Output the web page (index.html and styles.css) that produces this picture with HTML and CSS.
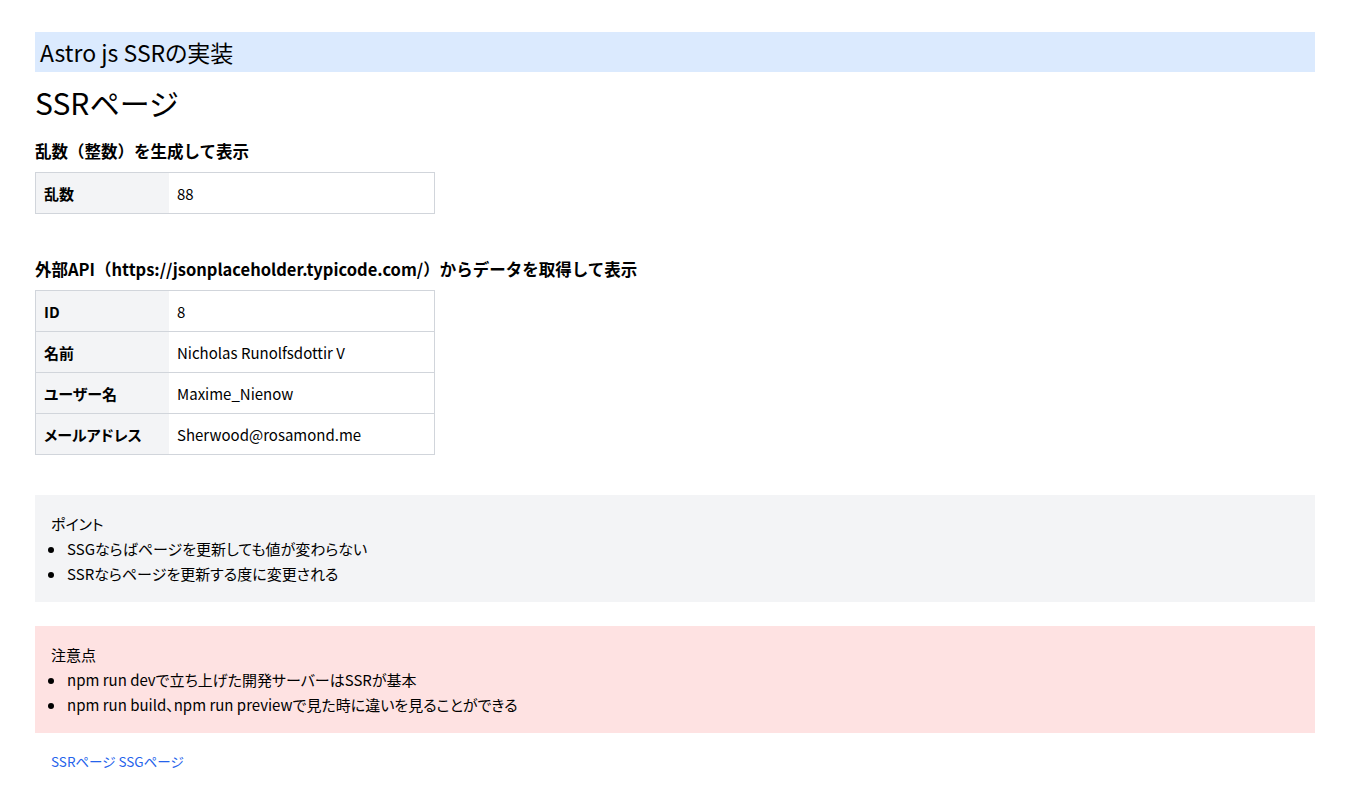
FILE: index.html
```html
<!DOCTYPE html>
<html lang="ja">
<head>
    <meta charset="UTF-8">
    <meta name="viewport" content="width=device-width, initial-scale=1.0">
    <title>Astro js SSRの実装</title>
    <link rel="stylesheet" href="styles.css">
</head>
<body>
    <div class="container">
        <h1 class="site-title">Astro js SSRの実装</h1>
        <h2 class="page-title">SSRページ</h2>

        <section class="block">
            <h3>乱数（整数）を生成して表示</h3>
            <table class="data">
                <tr><th>乱数</th><td>88</td></tr>
            </table>
        </section>

        <section class="block">
            <h3>外部API（https://jsonplaceholder.typicode.com/）からデータを取得して表示</h3>
            <table class="data">
                <tr><th>ID</th><td>8</td></tr>
                <tr><th>名前</th><td>Nicholas Runolfsdottir V</td></tr>
                <tr><th>ユーザー名</th><td>Maxime_Nienow</td></tr>
                <tr><th>メールアドレス</th><td>Sherwood@rosamond.me</td></tr>
            </table>
        </section>

        <div class="note point">
            <p>ポイント</p>
            <ul>
                <li>SSGならばページを更新しても値が変わらない</li>
                <li>SSRならページを更新する度に変更される</li>
            </ul>
        </div>

        <div class="note warning">
            <p>注意点</p>
            <ul>
                <li>npm run devで立ち上げた開発サーバーはSSRが基本</li>
                <li>npm run build、npm run previewで見た時に違いを見ることができる</li>
            </ul>
        </div>

        <nav class="links">
            <a href="/">SSRページ</a>
            <a href="/ssg">SSGページ</a>
        </nav>
    </div>
</body>
</html>
```

FILE: styles.css
```css
/* base */
body {
    margin: 0;
    padding: 0;
    font-family: "Noto Sans CJK JP", sans-serif;
    font-feature-settings: "palt";
    color: #000;
    background-color: #fff;
}

.container {
    max-width: 1280px;
    margin: 0 auto;
    padding-top: 32px;
}

/* headings */
.site-title {
    margin: 0;
    padding: 0 5px;
    height: 40px;
    line-height: 40px;
    font-size: 23px;
    font-weight: normal;
    background-color: #dbeafe;
}

.page-title {
    margin: 12px 0 0;
    font-size: 30px;
    line-height: 36px;
    font-weight: normal;
}

.block h3 {
    margin: 18px 0 8px;
    font-size: 16.5px;
    line-height: 26px;
    font-weight: bold;
    font-feature-settings: normal;
}

.block + .block h3 {
    margin-top: 42px;
}

/* tables */
.data {
    width: 400px;
    border-collapse: collapse;
    border: 1px solid #d1d5db;
    font-size: 15px;
}

.data tr {
    border-bottom: 1px solid #d1d5db;
}

.data th,
.data td {
    padding: 9px 8px 7px 8px;
    line-height: 24px;
    text-align: left;
}

.data th {
    width: 117px;
    background-color: #f3f4f6;
    font-weight: bold;
}

/* notes */
.note {
    padding: 16px;
    font-size: 15px;
    line-height: 25px;
}

.note p {
    margin: 0;
}

.note ul {
    margin: 0;
    padding-left: 15px;
}

.note li {
    padding-left: 1px;
}

.point {
    margin-top: 40px;
    background-color: #f3f4f6;
}

.warning {
    margin-top: 24px;
    background-color: #fee2e2;
}

/* footer links */
.links {
    margin-top: 16px;
    padding-left: 16px;
    font-size: 13.5px;
    line-height: 25px;
}

.links a {
    color: #2563eb;
    text-decoration: none;
}
```
